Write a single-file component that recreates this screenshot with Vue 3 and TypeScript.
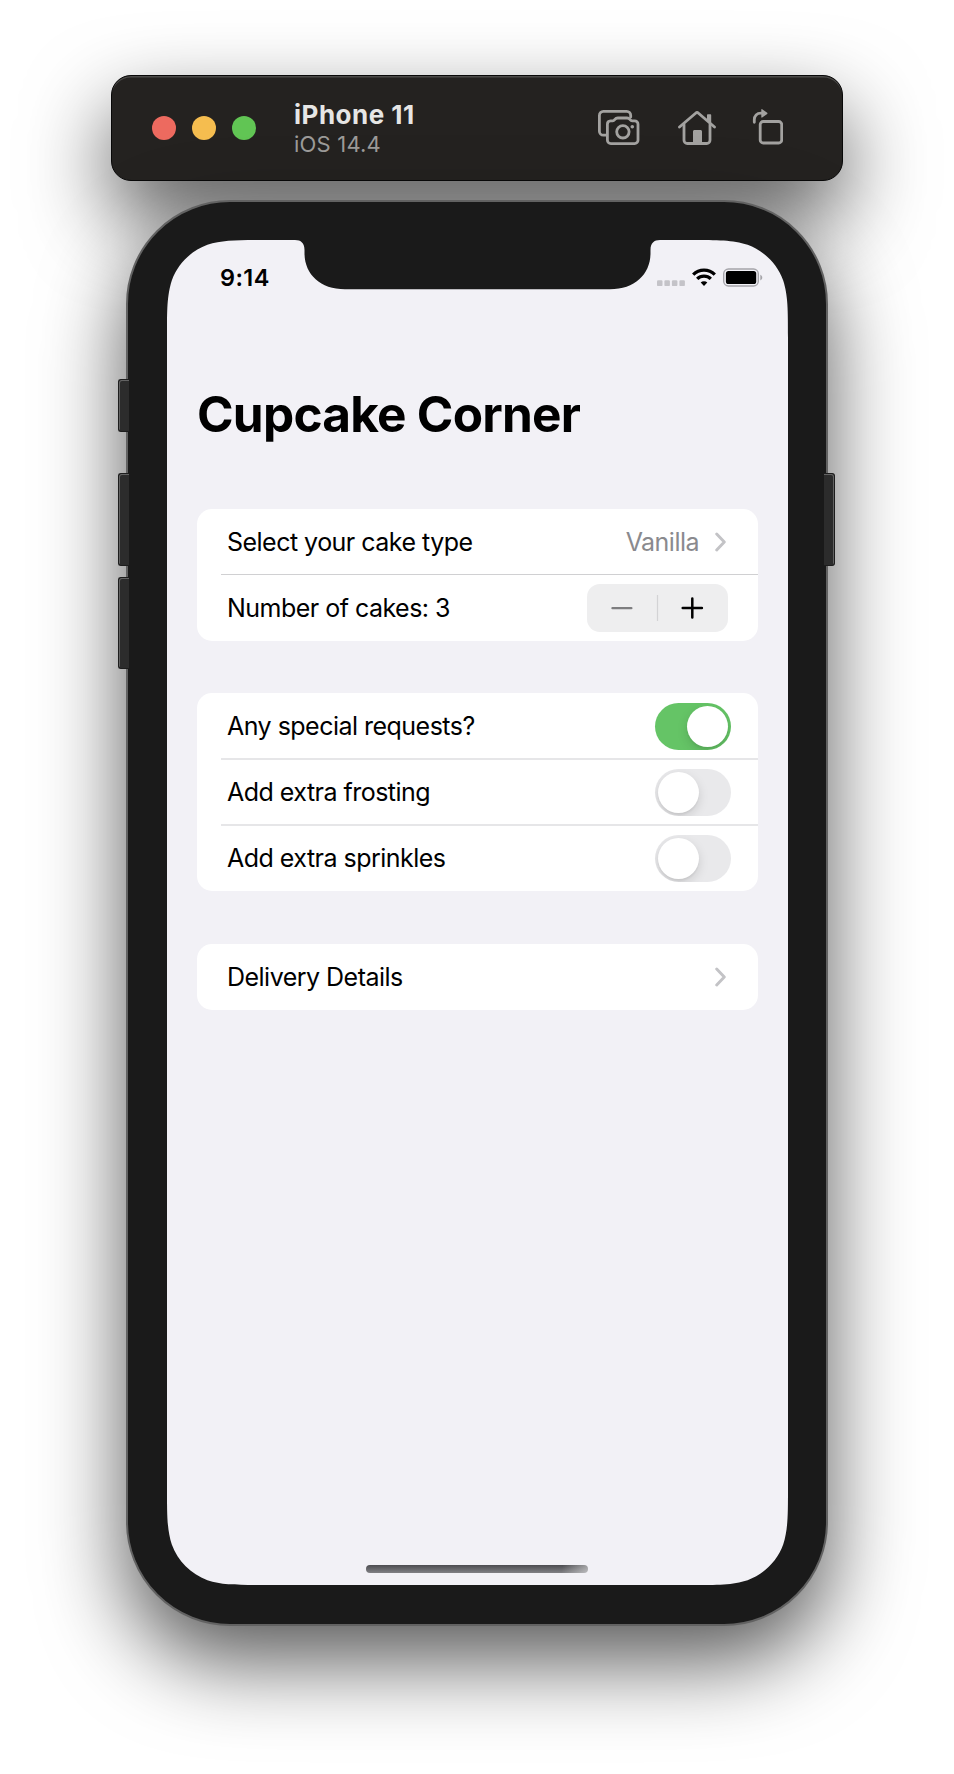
<script setup lang="ts">
import { ref } from 'vue'

interface Toggle {
  label: string
  on: boolean
}

const cakeType = ref('Vanilla')
const quantity = ref(3)
const toggles = ref<Toggle[]>([
  { label: 'Any special requests?', on: true },
  { label: 'Add extra frosting', on: false },
  { label: 'Add extra sprinkles', on: false },
])
</script>

<template>
  <main class="desktop">
    <header class="toolbar">
      <div class="lights">
        <i class="light red"></i>
        <i class="light amber"></i>
        <i class="light green"></i>
      </div>
      <div class="device">
        <div class="device-name">iPhone 11</div>
        <div class="device-os">iOS 14.4</div>
      </div>
      <div class="tools">
        <svg class="tool" width="42" height="38" viewBox="0 0 42 38">
          <path d="M8.2 26.2H5.4a4 4 0 0 1-4-4V6.4a4 4 0 0 1 4-4h23.3a4 4 0 0 1 4 4V8" />
          <path d="M12.6 11.8h2.1c1.2 0 1.5-.6 2.2-1.500.8-1 1.500-1.300 2.800-1.300h9.400c1.300 0 2 .300 2.800 1.300.700.900 1 1.500 2.200 1.500h2.500a3.400 3.400 0 0 1 3.400 3.400v16a3.400 3.400 0 0 1-3.400 3.400H12.800a3.400 3.400 0 0 1-3.400-3.400V15.200a3.400 3.400 0 0 1 3.200-3.400Z" />
          <circle cx="24.9" cy="22.8" r="6.2" />
          <circle class="solid" cx="34.3" cy="17.8" r="1.8" />
        </svg>
        <svg class="tool house" width="38" height="38" viewBox="0 0 38 38">
          <path d="M1.5 18 17.6 4.2a2.2 2.2 0 0 1 2.9 0L36.5 18" />
          <path d="M6 15.5v15.7a3.3 3.3 0 0 0 3.3 3.3h19.4a3.3 3.3 0 0 0 3.3-3.3V15.5" />
          <path class="solid" d="M15 34V22.5c0-1 .6-1.6 1.6-1.6h5.8c1 0 1.6.6 1.6 1.6V34ZM29 12V6.2c0-.6.4-1 1-1h2.2c.6 0 1 .4 1 1V15Z" />
        </svg>
        <svg class="tool" width="31" height="38" viewBox="0 0 31 38">
          <rect x="8.2" y="12.5" width="21.5" height="21.5" rx="3" />
          <path d="M2.3 13.3v-2.5c0-4.3 2.5-6.6 6.700-6.600h1.500" />
          <path class="solid" d="M9.3.6v7.500c0 .500.500.700.900.400l5-3.600c.400-.300.400-.800 0-1.100l-5-3.600c-.400-.300-.900-.100-.900.400Z" />
        </svg>
      </div>
    </header>

    <section class="phone">
      <i class="key mute"></i>
      <i class="key vol-up"></i>
      <i class="key vol-down"></i>
      <i class="key power"></i>
      <div class="screen">
        <div class="status">
          <span class="time">9:14</span>
          <svg class="indicators" width="108" height="20" viewBox="0 0 108 20">
            <g fill="#c4c3c8">
              <rect x="0" y="12.3" width="5.5" height="5.8" rx="1.2" />
              <rect x="7.4" y="12.3" width="5.5" height="5.8" rx="1.2" />
              <rect x="14.9" y="12.3" width="5.5" height="5.8" rx="1.2" />
              <rect x="22.4" y="12.3" width="5.5" height="5.8" rx="1.2" />
            </g>
            <g fill="none" stroke="#000" stroke-width="3.3">
              <path d="M36.2 6.6a15.3 15.3 0 0 1 21.600 0" />
              <path d="M40.2 10.9a9.6 9.6 0 0 1 13.600 0" />
            </g>
            <path d="M47 18 43.7 14.6a4.7 4.7 0 0 1 6.600 0Z" />
            <rect x="66.7" y="1" width="34.6" height="17" rx="4.8" fill="none" stroke="#a5a4a9" stroke-width="1.4" />
            <rect x="68.9" y="3" width="30.3" height="13" rx="2.6" />
            <path d="M103.3 6.8c2.6 1 2.600 4.600 0 5.600Z" fill="#a5a4a9" />
          </svg>
        </div>

        <h1 class="title">Cupcake Corner</h1>

        <div class="card hairline">
          <div class="row">
            <span>Select your cake type</span>
            <span class="value">{{ cakeType }}</span>
            <svg class="chevron" width="11" height="20" viewBox="0 0 11 20">
              <path d="M1.7 2 9.3 10 1.7 18" />
            </svg>
          </div>
          <div class="row">
            <span>Number of cakes: {{ quantity }}</span>
            <div class="stepper">
              <svg width="141" height="48" viewBox="0 0 141 48">
                <path d="M25.4 24.2h19" stroke="#7d7d7f" stroke-width="2.2" stroke-linecap="round" />
                <path d="M70.5 11v26" stroke="#d3d3d5" stroke-width="1.2" />
                <path d="M95.700 24h19.200M105.300 14.400v19.200" stroke="#000" stroke-width="2.500" stroke-linecap="round" />
              </svg>
            </div>
          </div>
        </div>

        <div class="card">
          <div v-for="t in toggles" :key="t.label" class="row">
            <span>{{ t.label }}</span>
            <div class="switch" :class="{ on: t.on }"><i class="knob"></i></div>
          </div>
        </div>

        <div class="card">
          <div class="row">
            <span>Delivery Details</span>
            <svg class="chevron alone" width="11" height="20" viewBox="0 0 11 20">
              <path d="M1.7 2 9.3 10 1.7 18" />
            </svg>
          </div>
        </div>

        <i class="home-bar"></i>
      </div>
    </section>
  </main>
</template>

<style>
body {
  margin: 0;
  background: #fff;
}
</style>

<style scoped>
.desktop {
  box-sizing: border-box;
  width: 954px;
  height: 1774px;
  padding-top: 75px;
  overflow: hidden;
  background: #fff;
  font-family: Inter, "Liberation Sans", sans-serif;
  display: flex;
  flex-direction: column;
  align-items: center;
}

.toolbar {
  box-sizing: border-box;
  width: 732px;
  height: 106px;
  padding: 0 60px 0 40px;
  border: 1px solid #080808;
  border-radius: 20px;
  background: #242220;
  box-shadow: inset 0 2px 0 -0.5px #4b4a48, 0 36px 84px rgba(0, 0, 0, 0.65);
  display: flex;
  align-items: center;
}

.lights {
  display: flex;
  gap: 16px;
}

.light {
  width: 24px;
  height: 24px;
  border-radius: 50%;
}

.red { background: #ed6a5f; }
.amber { background: #f5bd4f; }
.green { background: #61c554; }

.device {
  margin-left: 38px;
  white-space: nowrap;
}

.device-name {
  padding-top: 1px;
  font-size: 26px;
  font-weight: 700;
  line-height: 30px;
  letter-spacing: 0.5px;
  color: #e6e6e5;
}

.device-os {
  margin-top: 1px;
  font-size: 22px;
  line-height: 26px;
  letter-spacing: 0.2px;
  color: #9c9b99;
}

.tools {
  margin-left: auto;
  display: flex;
  margin-right: -1px;
}

.tool {
  fill: none;
  stroke: #a3a2a0;
  stroke-width: 2.8;
  stroke-linecap: round;
  stroke-linejoin: round;
}

.tool .solid {
  fill: #a3a2a0;
  stroke: none;
}

.house {
  margin: 0 36px 0 38px;
}

.phone {
  position: relative;
  box-sizing: border-box;
  width: 702px;
  height: 1426px;
  margin-top: 19px;
  padding: 38px 0 0 39px;
  border: 2px solid #626262;
  border-radius: 104px;
  background: #1a1a1a;
  box-shadow: 0 36px 84px rgba(0, 0, 0, 0.65);
}

.key {
  position: absolute;
  box-sizing: border-box;
  left: -10px;
  width: 11px;
  border: 1px solid #1d1d1d;
  border-right: 0;
  border-radius: 3px 0 0 3px;
  background: #2c2c2c;
  box-shadow: inset 1px 1px 0 #636363;
}

.mute { top: 177px; height: 53px; }
.vol-up { top: 271px; height: 93px; }
.vol-down { top: 375px; height: 92px; }

.power {
  top: 271px;
  left: auto;
  right: -9px;
  height: 93px;
  border: 1px solid #1d1d1d;
  border-left: 0;
  border-radius: 0 3px 3px 0;
  box-shadow: inset -1px 1px 0 #636363;
}

.screen {
  position: relative;
  box-sizing: border-box;
  width: 621px;
  height: 1345px;
  padding: 23px 30px 0;
  background: #f2f1f6;
  clip-path: path("M97.8 0H128C134 0 137.500 3 137.500 10V13C137.500 34 153 49.3 178 49.3H443C468 49.3 483.500 34 483.500 13V10C483.500 3 487 0 493 0H523.2C551.3 0 565.4 0 580.6 4.8C597.1 10.8 610.2 23.9 616.2 40.4C621 55.6 621 69.7 621 97.8V1247.2C621 1275.3 621 1289.4 616.2 1304.6C610.2 1321.1 597.1 1334.2 580.6 1340.2C565.4 1345 551.3 1345 523.2 1345H97.8C69.7 1345 55.6 1345 40.4 1340.2C23.9 1334.2 10.8 1321.1 4.8 1304.6C0 1289.4 0 1275.3 0 1247.2V97.8C0 69.7 0 55.6 4.8 40.4C10.8 23.9 23.9 10.8 40.4 4.8C55.6 0 69.7 0 97.8 0Z");
}

.status {
  display: flex;
  justify-content: space-between;
  align-items: center;
  height: 30px;
  margin: 0 -7px 0 23px;
}

.time {
  font-size: 23.5px;
  font-weight: 600;
  line-height: 30px;
  letter-spacing: 0.4px;
  color: #000;
}

.title {
  margin: 91px 0 65px;
  font-size: 49.5px;
  font-weight: 700;
  line-height: 60px;
  letter-spacing: -0.75px;
  color: #000;
  white-space: nowrap;
}

.card {
  width: 561px;
  border-radius: 15px;
  background: #fff;
  margin-bottom: 52.7px;
}

.card.hairline {
  margin-bottom: 52.4px;
}

.row {
  position: relative;
  box-sizing: border-box;
  display: flex;
  align-items: center;
  height: 66px;
  padding: 0 30px;
  font-size: 25px;
  letter-spacing: -0.52px;
  color: #000;
  white-space: nowrap;
}

.row + .row::before {
  content: "";
  position: absolute;
  top: -1px;
  left: 24px;
  right: 0;
  height: 2px;
  background: #e6e6e8;
}

.hairline .row + .row::before {
  height: 1px;
  background: #d0d0d2;
}

.value {
  margin-left: auto;
  color: #8a8a8e;
}

.chevron {
  margin-left: 16px;
  margin-right: 2px;
  fill: none;
  stroke: #c3c3c6;
  stroke-width: 2.9;
  stroke-linecap: round;
  stroke-linejoin: round;
}

.chevron.alone {
  margin-left: auto;
}

.stepper {
  width: 141px;
  height: 48px;
  margin-left: auto;
  border-radius: 13px;
  background: #eeeeef;
}

.stepper svg {
  display: block;
}

.switch {
  box-sizing: border-box;
  width: 76.5px;
  height: 47px;
  margin: 0 -3px 0 auto;
  padding: 3px;
  border-radius: 24px;
  background: #e9e9eb;
  display: flex;
  overflow: hidden;
}

.switch.on {
  background: #65c466;
  justify-content: flex-end;
}

.knob {
  width: 41px;
  height: 41px;
  border-radius: 50%;
  background: #fff;
  box-shadow: 0 4px 11px rgba(0, 0, 0, 0.13), 0 2px 2px rgba(0, 0, 0, 0.05);
}

.home-bar {
  position: absolute;
  left: 199px;
  bottom: 12px;
  width: 222px;
  height: 8px;
  border-radius: 4px;
  background:
    linear-gradient(100deg, rgba(255, 255, 255, 0) 88%, rgba(255, 255, 255, 0.48) 100%),
    linear-gradient(#4c4c50, #808084);
}
</style>
